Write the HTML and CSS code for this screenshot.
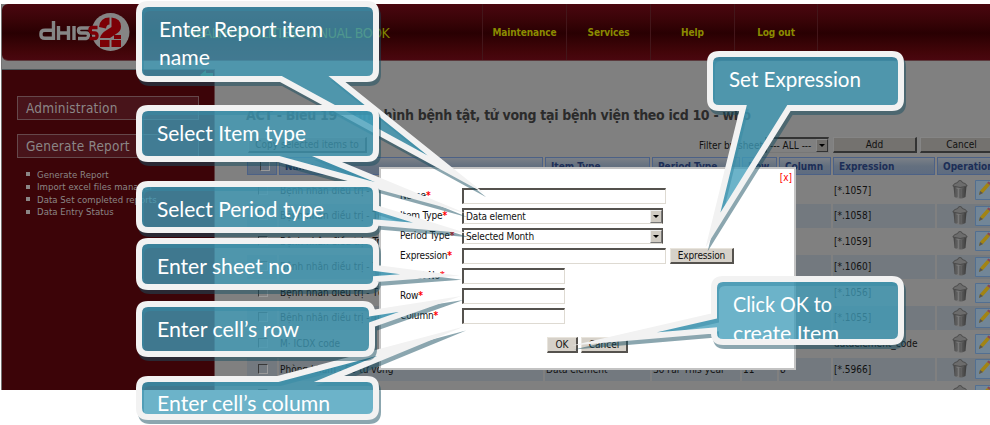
FILE: index.html
```html
<!DOCTYPE html>
<html lang="vi">
<head>
<meta charset="utf-8">
<title>Report items</title>
<link rel="stylesheet" href="styles.css">
</head>
<body>
<div class="app">
  <header class="top">
    <svg class="logo" width="96" height="42" viewBox="0 0 96 42">
      <g fill="none" stroke="#858585" stroke-width="3.4">
        <path d="M15.500 9v17.300H7q-4 0-4-3v-2q0-3 4-3h7M20.500 14v14M20.500 21h10M30.500 14v14M36 14v14M52 16H43q-2.500 0-2.500 2.500T43 21h5q2.500 0 2.500 2.500T48 26.500H40"/>
      </g>
      <circle cx="72.500" cy="20" r="19" fill="#858585"/>
      <path d="M59.500 15.500H54.500q-2.500 0-2.500 2.500t2.500 3h2q2.500 0 2.500 2.800T56.500 26.500H51.500" fill="none" stroke="#7c0006" stroke-width="3.400"/>
      <path d="M61 15q1-9.500 10.500-9.500v7q-3 0-3.500 4zM73.500 5.500q9.500 1 9.500 9 0 5-5 7.500l-6 4H62q1-4.500 6-7.500l5.500-3.500zM62 28h9.500v7H62zM73.500 28H83v7h-9.500zM76 23h7v4h-7z" fill="#7c0006"/>
    </svg>
    <div class="book">HEALTH FACILITIES MANUAL BOOK</div>
    <nav class="menu"><a>Maintenance</a><a>Services</a><a>Help</a><a>Log out</a></nav>
  </header>
  <div class="body">
    <aside class="side">
      <svg class="arrow" width="14" height="10" viewBox="0 0 14 10"><path d="M0 5l6-5v3h7v4H6v3z" fill="#3f7d4f"/></svg>
      <h3>Administration</h3>
      <h3>Generate Report</h3>
      <ul><li>Generate Report</li><li>Import excel files manager</li><li>Data Set completed reports</li><li>Data Entry Status</li></ul>
    </aside>
    <main class="main">
      <h1>ACT - Biểu 19 - Tình hình bệnh tật, tử vong tại bệnh viện theo icd 10 - who</h1>
      <div class="tools">
        <span class="btn copy">Copy selected items to</span>
        <span class="filter">Filter by sheet</span>
        <span class="sel all">--- ALL ---<i></i></span>
        <span class="btn add">Add</span>
        <span class="btn cancel">Cancel</span>
      </div>
      <div class="row head"><b><i class="check"></i></b><b>Name</b><b>Item Type</b><b>Period Type</b><b>Row</b><b>Column</b><b>Expression</b><b>Operations</b></div>
      <div class="row"><span><i class="check"></i></span><span>Bệnh nhân điều trị - Tổng</span><span>Data element</span><span>Selected Month</span><span>11</span><span>1</span><span>[*.1057]</span><span class="ops"><svg><use href="#bin"/></svg><svg><use href="#edit"/></svg></span></div>
      <div class="row"><span><i class="check"></i></span><span>Bệnh nhân điều trị - Tổng</span><span>Data element</span><span>Selected Month</span><span>11</span><span>2</span><span>[*.1058]</span><span class="ops"><svg><use href="#bin"/></svg><svg><use href="#edit"/></svg></span></div>
      <div class="row"><span><i class="check"></i></span><span>Bệnh nhân điều trị - Trẻ em</span><span>Data element</span><span>Selected Month</span><span>11</span><span>3</span><span>[*.1059]</span><span class="ops"><svg><use href="#bin"/></svg><svg><use href="#edit"/></svg></span></div>
      <div class="row"><span><i class="check"></i></span><span>Bệnh nhân điều trị - Tổng</span><span>Data element</span><span>Selected Month</span><span>11</span><span>4</span><span>[*.1060]</span><span class="ops"><svg><use href="#bin"/></svg><svg><use href="#edit"/></svg></span></div>
      <div class="row"><span><i class="check"></i></span><span>Bệnh nhân điều trị - Tổng</span><span>Data element</span><span>Selected Month</span><span>11</span><span>5</span><span>[*.1056]</span><span class="ops"><svg><use href="#bin"/></svg><svg><use href="#edit"/></svg></span></div>
      <div class="row"><span><i class="check"></i></span><span>Bệnh nhân điều trị - Tổng</span><span>Data element</span><span>Selected Month</span><span>11</span><span>6</span><span>[*.1055]</span><span class="ops"><svg><use href="#bin"/></svg><svg><use href="#edit"/></svg></span></div>
      <div class="row"><span><i class="check"></i></span><span>M· ICDX code</span><span>Data element</span><span>Selected Month</span><span>11</span><span>7</span><span>dataelement_code</span><span class="ops"><svg><use href="#bin"/></svg><svg><use href="#edit"/></svg></span></div>
      <div class="row"><span><i class="check"></i></span><span>Phòng khám - Số tử vong</span><span>Data element</span><span>So Far This year</span><span>11</span><span>8</span><span>[*.5966]</span><span class="ops"><svg><use href="#bin"/></svg><svg><use href="#edit"/></svg></span></div>
      <div class="row"><span><i class="check"></i></span><span></span><span></span><span></span><span></span><span></span><span></span><span class="ops"><svg><use href="#bin"/></svg><svg><use href="#edit"/></svg></span></div>
    </main>
  </div>
</div>

<section class="modal">
  <span class="close">[x]</span>
  <div class="form">
    <label>Name<em>*</em></label><div><span class="inp"></span></div>
    <label>Item Type<em>*</em></label><div><span class="sel">Data element<i></i></span></div>
    <label>Period Type<em>*</em></label><div><span class="sel">Selected Month<i></i></span></div>
    <label>Expression<em>*</em></label><div><span class="inp"></span><span class="btn expr">Expression</span></div>
    <label>Sheet No<em>*</em></label><div><span class="inp short"></span></div>
    <label>Row<em>*</em></label><div><span class="inp short"></span></div>
    <label>Column<em>*</em></label><div><span class="inp short"></span></div>
  </div>
  <div class="actions"><span class="btn ok">OK</span><span class="btn no">Cancel</span></div>
</section>

<svg class="callouts" width="990" height="425" viewBox="0 0 990 425">
  <defs>
    <linearGradient id="metal"><stop offset="0" stop-color="#3c3c3c"/><stop offset=".35" stop-color="#7c7c7c"/><stop offset="1" stop-color="#383838"/></linearGradient>
    <symbol id="bin" viewBox="0 0 16 20"><path d="M1.500 6h13l-1 11q-5.500 3.500-11 0z" fill="url(#metal)"/><path d="M5 9v8M8 9v9M11 9v8" stroke="#4c4c4c" stroke-width=".7" fill="none"/><path d="M.8 6q1-3 5-3.500 0-2 2.200-2t2.200 2q4 .5 5 3.500-7 3-14.400 0z" fill="#6c6c6c" stroke="#444" stroke-width=".8"/></symbol>
    <symbol id="edit" viewBox="0 0 16 20"><path d="M.5.500h15v19H.5z" fill="#728697" stroke="#526f91"/><path d="M5 11l7-8 3 2-7 8-4 2z" fill="#a28413"/><path d="M12 3l1.500-1.500 3 2L15 5z" fill="#8b4750"/><path d="M5 11l-1 4 4-2z" fill="#555"/></symbol>
    <path id="c1" d="M148 4H367q9 0 9 9V70q0 9-9 9H337L456 174.500 281 79H148q-9 0-9-9V13q0-9 9-9z"/>
    <path id="c2" d="M148 108H367q9 0 9 9V150q0 9-9 9H327L421 198 279 159H148q-9 0-9-9V117q0-9 9-9z"/>
    <path id="c3" d="M148 184H367q9 0 9 9V208L440 228 376 222.500q0 7.500-9 7.500H148q-9 0-9-9V193q0-9 9-9z"/>
    <path id="c4" d="M148 241H367q9 0 9 9V268L430 275 376 279q0 8-9 8H148q-9 0-9-9V250q0-9 9-9z"/>
    <path id="c5" d="M148 304H363q9 0 9 9L430 304 372 324.500V345q0 9-9 9H148q-9 0-9-9V313q0-9 9-9z"/>
    <path id="c6" d="M148 379H278L421 341 329 379H367q9 0 9 9V408q0 9-9 9H148q-9 0-9-9V388q0-9 9-9z"/>
    <path id="c7" d="M719 54H892q9 0 9 9V99q0 9-9 9H789L713 230 743 108H719q-9 0-9-9V63q0-9 9-9z"/>
    <path id="c8" d="M723 279H892q9 0 9 9V333q0 9-9 9H723q-9 0-9-9V330.500L614 339 714 316V288q0-9 9-9z"/>
  </defs>
  <g><use class="shade" href="#c1"/><use class="shape" href="#c1"/></g>
  <g><use class="shade" href="#c2"/><use class="shape" href="#c2"/></g>
  <g><use class="shade" href="#c3"/><use class="shape" href="#c3"/></g>
  <g><use class="shade" href="#c4"/><use class="shape" href="#c4"/></g>
  <g><use class="shade" href="#c6"/><use class="shape" href="#c6"/></g>
  <g><use class="shade" href="#c5"/><use class="shape" href="#c5"/></g>
  <g><use class="shade" href="#c7"/><use class="shape" href="#c7"/></g>
  <g><use class="shade" href="#c8"/><use class="shape" href="#c8"/></g>
  <clipPath id="clip6"><path d="M142 380H374V414H142z"/></clipPath>
  <clipPath id="clip8"><path d="M717 282H898V339.500H717z"/></clipPath>
  <g class="words">
    <text x="159" y="37" textLength="164" lengthAdjust="spacingAndGlyphs">Enter Report item</text>
    <text x="159" y="65" textLength="51" lengthAdjust="spacingAndGlyphs">name</text>
    <text x="157" y="141" textLength="149" lengthAdjust="spacingAndGlyphs">Select Item type</text>
    <text x="157" y="217" textLength="167" lengthAdjust="spacingAndGlyphs">Select Period type</text>
    <text x="157" y="274" textLength="135" lengthAdjust="spacingAndGlyphs">Enter sheet no</text>
    <text x="157" y="336.500" textLength="142" lengthAdjust="spacingAndGlyphs">Enter cell’s row</text>
    <text x="157" y="411" textLength="173" lengthAdjust="spacingAndGlyphs" clip-path="url(#clip6)">Enter cell’s column</text>
    <text x="729" y="87" textLength="132" lengthAdjust="spacingAndGlyphs">Set Expression</text>
    <text x="733" y="312" textLength="99" lengthAdjust="spacingAndGlyphs">Click OK to</text>
    <text x="733" y="341" textLength="106" lengthAdjust="spacingAndGlyphs" clip-path="url(#clip8)">create Item</text>
  </g>
</svg>
</body>
</html>
```
FILE: styles.css
```css
* { box-sizing: border-box; }
body { margin: 0; width: 990px; height: 425px; overflow: hidden; background: #fff; padding: 4px 0 0 1px; font: 10px "DejaVu Sans Condensed", "DejaVu Sans", sans-serif; color: #111; }
.app { height: 386px; overflow: hidden; background: #808080; border-left: 1px solid #737373; }
.top { height: 57px; display: flex; align-items: center; border-radius: 6px 0 0 6px; border-bottom: 1px solid #5c3a3d; background: linear-gradient(#4a070f, #3a0408 28%, #290002 52%, #420509 85%, #4a070f); }
.logo { margin: 8px 0 6px 36px; flex: none; }
.book { margin-left: 53px; width: 203px; font-size: 14px; line-height: 18px; padding-top: 2px; color: #7f8500; white-space: nowrap; letter-spacing: -.45px; }
.menu { margin-left: 92px; display: flex; height: 56px; }
.menu a { width: 84px; border-left: 1px solid #43161a; text-align: center; line-height: 58px; font-weight: bold; color: #8b8b00; letter-spacing: -.1px; }
.menu a:last-child { border-right: 1px solid #43161a; }
.body { display: flex; height: 329px; padding-top: 8px; }
.side { width: 213px; flex: none; background: #3c0408; border-top: 1px solid #4c5558; border-right: 1px solid #5d3b3e; color: #8b8686; position: relative; padding: 26px 15px; }
.arrow { position: absolute; right: 0; top: 0; }
.side h3 { margin: 0 0 14px; height: 24px; line-height: 23px; border: 1px solid #65484b; background: #48141a; font-size: 13.500px; font-weight: normal; padding-left: 8px; letter-spacing: .2px; }
.side ul { margin: -4px 0 0; padding: 0 0 0 9px; list-style: none; white-space: nowrap; font-size: 9.500px; letter-spacing: .05px; }
.side li { height: 12.500px; line-height: 13px; display: flex; align-items: center; }
.side li::before { content: ""; width: 4px; height: 4px; background: #8b8686; margin-right: 7px; }
.main { width: 775px; flex: none; padding: 36px 0 0 32px; overflow: hidden; }
h1 { margin: 0 0 0 -1px; height: 32px; font-size: 14px; line-height: 20px; color: #2b2b2b; white-space: nowrap; letter-spacing: -.31px; }
.tools { display: flex; height: 16px; margin-bottom: 4px; align-items: center; white-space: nowrap; }
.tools > * { flex: none; }
.btn { display: block; height: 16px; line-height: 14px; text-align: center; background: #d6d1c9; border: 1px solid; border-color: #e8e4dc #55524e #55524e #e8e4dc; border-width: 1px 2px 2px 1px; }
.tools .btn { background: #74726f; border-color: #858585 #333 #333 #858585; }
.copy { width: 119px; margin-left: 1px; }
.filter { margin-left: 332px; width: 66px; }
.add { width: 84px; margin-left: 4px; }
.cancel { width: 84px; margin-left: 3px; }
.sel { position: relative; display: block; width: 201px; height: 16px; line-height: 13px; padding-left: 2px; background: #fff; border: 2px solid; border-color: #55524e #55524e #dedad2 #55524e; border-right-width: 1px; border-bottom-width: 1px; }
.sel i { position: absolute; right: 0; top: 0; width: 12px; height: 13px; background: #d0cbc2; border: 1px solid #777; border-left-color: #eee; border-top-color: #eee; }
.sel i::after { content: ""; position: absolute; left: 2px; top: 4px; border: 3px solid transparent; border-top-color: #000; border-bottom: 0; }
.all { width: 64px; background: #808080; border-color: #333 #777 #777 #333; padding-left: 3px; }
.all i { background: #706e6b; border-color: #888 #333 #333 #888; }
.row { display: grid; grid-template-columns: 30px 264px 105px 88px 35px 52px 102px 62px; column-gap: 2px; width: 754px; height: 23.600px; margin-bottom: 2px; line-height: 24px; white-space: nowrap; }
.row > * { padding-left: 1px; overflow: hidden; }
.row:nth-child(odd) > * { background: #73797f; }
.row > :first-child { text-align: center; }
.row.head { height: 18px; line-height: 18px; margin-bottom: 3.500px; color: #1c2e57; }
.row.head b { padding-left: 5px; border: 1px solid #4c6186; background: linear-gradient(#7b8087, #64707f 50%, #5e6c80); }
.check { display: inline-block; width: 10px; height: 10px; margin-top: 6px; border: 1px solid; border-color: #383838 #999 #999 #383838; }
.head .check { margin-top: 3px; }
.ops { display: flex; align-items: center; }
.row .ops { padding-left: 15px; }
.ops svg { width: 16px; height: 20px; flex: none; margin-right: 7px; }
.modal { position: absolute; left: 379px; top: 167px; width: 417px; height: 203px; background: #fff; border: 2px solid #c3c3c3; padding: 19px 0 0 19px; }
.close { position: absolute; right: 2px; top: 3px; color: #f00; }
.form { display: grid; grid-template-columns: 62px 1fr; row-gap: 4px; grid-auto-rows: 16px; line-height: 16px; white-space: nowrap; letter-spacing: -.15px; }
.form > div { display: flex; }
em { color: #f00; font-style: normal; font-weight: bold; }
.inp { width: 204px; height: 16px; border: 2px solid; border-color: #55524e #dedad2 #dedad2 #55524e; border-right-width: 1px; border-bottom-width: 1px; }
.short { width: 103px; }
.expr { width: 64px; margin-left: 4px; }
.actions { display: flex; gap: 3px; margin: 13px 0 0 147px; }
.ok { width: 31px; }
.no { width: 47px; }
.callouts { position: absolute; left: 0; top: 0; }
.shape { fill: rgba(64, 156, 185, .77); stroke: #f2f2f2; stroke-width: 6px; stroke-miterlimit: 40; }
.shade { fill: none; stroke: rgba(24, 78, 95, .5); stroke-width: 6px; stroke-miterlimit: 40; transform: translate(2px, 4px); }
.words { fill: #fff; font: 20.500px Lato, sans-serif; }
```
